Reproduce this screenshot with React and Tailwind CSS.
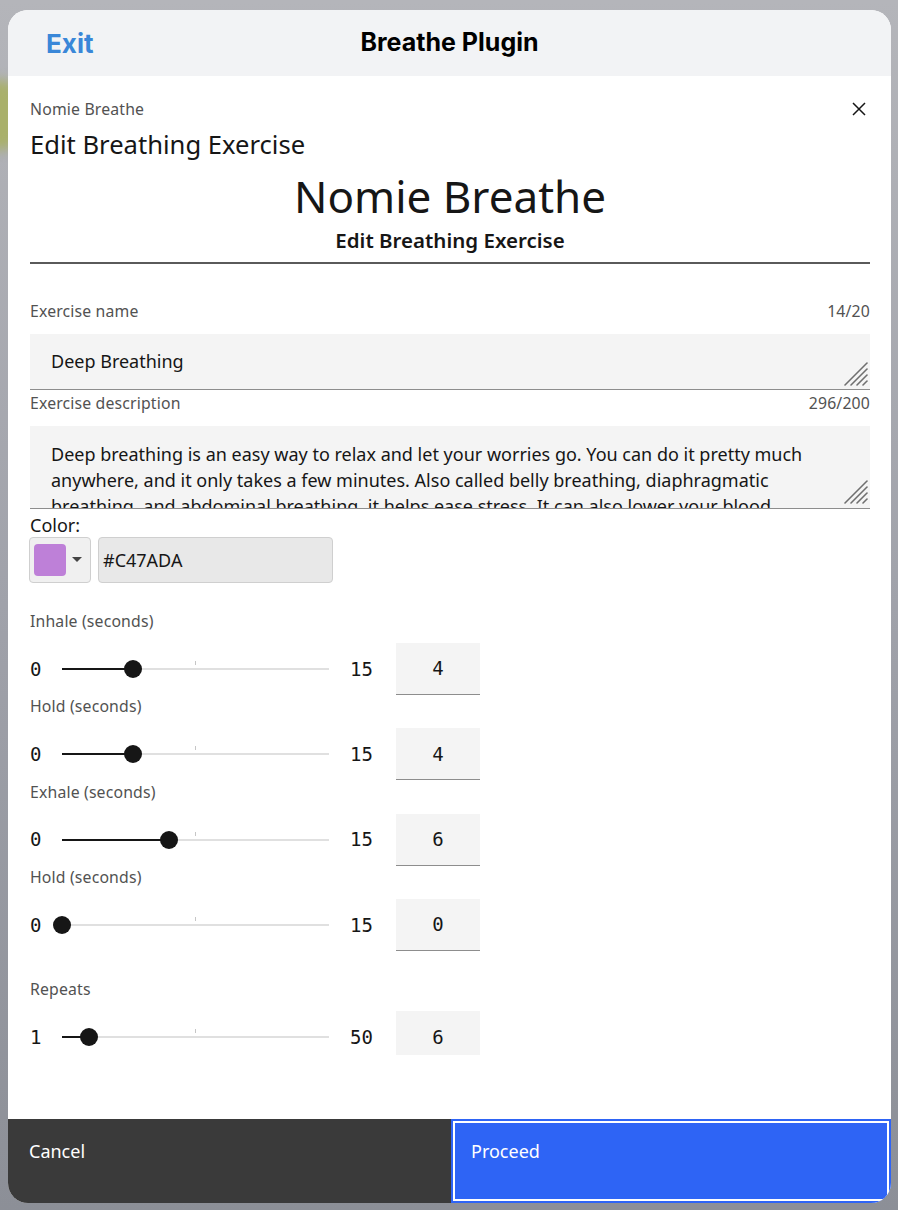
import React from 'react';

const sans = "font-['Noto_Sans',sans-serif]";
const mono = "font-['DejaVu_Sans_Mono',monospace]";

const description = [
  'Deep breathing is an easy way to relax and let your worries go. You can do it pretty much',
  'anywhere, and it only takes a few minutes. Also called belly breathing, diaphragmatic',
  'breathing, and abdominal breathing, it helps ease stress. It can also lower your blood',
  'pressure and heart rate.',
];

const sliders = [
  { label: 'Inhale (seconds)', min: 0, max: 15, value: 4 },
  { label: 'Hold (seconds)', min: 0, max: 15, value: 4 },
  { label: 'Exhale (seconds)', min: 0, max: 15, value: 6 },
  { label: 'Hold (seconds)', min: 0, max: 15, value: 0 },
];

// little diagonal grip drawn in the corner of a textarea
const Grip = ({ className }) => (
  <svg className={className} width="26" height="26" viewBox="0 0 26 26">
    <g stroke="#6f6f6f" strokeWidth="1.6" strokeLinecap="round">
      <line x1="2" y1="24" x2="24" y2="2" />
      <line x1="8" y1="24" x2="24" y2="8" />
      <line x1="14" y1="24" x2="24" y2="14" />
      <line x1="20" y1="24" x2="24" y2="20" />
    </g>
  </svg>
);

const Track = ({ min, max, value }) => {
  const pos = ((value - min) / (max - min)) * 267;
  return (
    <div className="relative w-[267px] h-[20px]">
      <div className="absolute left-0 right-0 top-[9px] h-[2px] bg-[#e0e0e0]" />
      <div className="absolute left-[133px] top-[2px] w-[1px] h-[4px] bg-[#c6c6c6]" />
      <div className="absolute left-0 top-[9px] h-[2px] bg-[#161616]" style={{ width: pos }} />
      <div
        className="absolute top-[1px] w-[18px] h-[18px] rounded-full bg-[#161616]"
        style={{ left: pos - 9 }}
      />
    </div>
  );
};

const SliderRow = ({ min, max, value, last }) => (
  <div className={`flex items-center h-[52px] text-[19px] text-[#161616] ${mono}`}>
    <span className="w-[32px]">{min}</span>
    <Track min={min} max={max} value={value} />
    <span className="ml-[21px] w-[25px]">{max}</span>
    {last ? (
      <div className="ml-[21px] w-[84px] h-[44px] self-start bg-[#f4f4f4] flex items-center justify-center pt-[8px]">
        {value}
      </div>
    ) : (
      <div className="ml-[21px] w-[84px] h-[52px] bg-[#f4f4f4] border-b border-[#8d8d8d] flex items-center justify-center">
        {value}
      </div>
    )}
  </div>
);

const label = 'text-[15.8px] leading-[20px] text-[#525252] tracking-[0.16px]';

export default function App() {
  return (
    <div className="relative min-h-[1210px] w-[898px] overflow-hidden bg-gradient-to-b from-[#b4b5ba] via-[#a0a2aa] to-[#8c8f97] pt-[10px] pl-[8px]">
      <div className="absolute -left-[20px] top-[80px] w-[40px] h-[70px] rounded-full bg-[#a9b06a] blur-[6px]" />
      <div className="relative w-[883px] h-[1193px] rounded-[20px] overflow-hidden bg-white flex flex-col">
        {/* Header */}
        <div className="h-[66px] shrink-0 bg-[#f2f3f5] grid grid-cols-[1fr_auto_1fr] items-center font-['Inter',sans-serif]">
          <span className="pl-[38px] text-[26px] font-bold text-[#3a87d8]">Exit</span>
          <span className="text-[25px] font-bold text-black">Breathe Plugin</span>
          <span />
        </div>

        {/* Body */}
        <div className={`flex-1 pl-[22px] pr-[21px] pt-[23px] ${sans}`}>
          <div className="flex items-center justify-between">
            <span className={label}>Nomie Breathe</span>
            <svg width="14" height="14" viewBox="0 0 14 14" className="mr-[4px]">
              <path d="M1 1L13 13M13 1L1 13" stroke="#161616" strokeWidth="1.5" />
            </svg>
          </div>
          <div className="mt-[10px] text-[25.6px] leading-[32px] text-[#161616]">Edit Breathing Exercise</div>
          <div className="mt-[10px] text-center text-[44px] leading-[50px] text-[#161616]">Nomie Breathe</div>
          <div className="mt-[7px] text-center text-[20.5px] leading-[24px] font-semibold text-[#161616]">
            Edit Breathing Exercise
          </div>
          <div className="mt-[10px] h-[2px] bg-[#5a5a5a]" />

          {/* Exercise name */}
          <div className={`mt-[37px] flex justify-between ${label}`}>
            <span>Exercise name</span>
            <span>14/20</span>
          </div>
          <div className="relative mt-[13px] h-[56px] bg-[#f4f4f4] border-b border-[#8d8d8d] pl-[21px] flex items-center text-[18px] text-[#161616]">
            Deep Breathing
            <Grip className="absolute right-[1px] bottom-[2px]" />
          </div>

          {/* Exercise description */}
          <div className={`mt-[3px] flex justify-between ${label}`}>
            <span>Exercise description</span>
            <span>296/200</span>
          </div>
          <div className="relative mt-[13px] h-[83px] overflow-hidden bg-[#f4f4f4] border-b border-[#8d8d8d] pl-[21px] pt-[15px] text-[18px] leading-[26px] text-[#161616]">
            {description.map((line) => (
              <span key={line} className="block whitespace-nowrap">
                {line}
              </span>
            ))}
            <Grip className="absolute right-[1px] bottom-[3px]" />
          </div>

          {/* Color */}
          <div className="mt-[6px] text-[18px] leading-[20px] text-[#161616]">Color:</div>
          <div className="mt-[2px] flex items-center gap-[7px] -ml-[1px]">
            <div className="w-[62px] h-[46px] rounded-[4px] border border-[#cfcfcf] bg-[#f0f0f0] flex items-center pl-[4px]">
              <div className="w-[32px] h-[32px] rounded-[4px] bg-[#be80d8]" />
              <svg width="10" height="6" viewBox="0 0 10 6" className="ml-[6px]">
                <path d="M0 0H10L5 5Z" fill="#444" />
              </svg>
            </div>
            <div className="w-[235px] h-[46px] rounded-[4px] border border-[#cfcfcf] bg-[#e8e8e8] flex items-center pl-[4px] text-[18px] text-[#161616]">
              #C47ADA
            </div>
          </div>

          {/* Sliders */}
          <div className="mt-[28px]">
            {sliders.map((s, i) => (
              <div key={i} className={i === 0 ? '' : 'mt-[1.3px]'}>
                <div className={label}>{s.label}</div>
                <div className="mt-[12px]">
                  <SliderRow min={s.min} max={s.max} value={s.value} />
                </div>
              </div>
            ))}
            <div className="mt-[28px]">
              <div className={label}>Repeats</div>
              <div className="mt-[12px]">
                <SliderRow min={1} max={50} value={6} last />
              </div>
            </div>
          </div>
        </div>

        {/* Footer */}
        <div className={`h-[84px] shrink-0 grid grid-cols-[443px_1fr] text-[18px] leading-[20px] text-white ${sans}`}>
          <div className="bg-[#3a3a3a] pl-[21px] pt-[22px]">Cancel</div>
          <div className="bg-[#2e64f5] pl-[20px] pt-[22px] shadow-[inset_0_0_0_2px_#2e64f5,inset_0_0_0_4px_#ffffff]">
            Proceed
          </div>
        </div>
      </div>
    </div>
  );
}
